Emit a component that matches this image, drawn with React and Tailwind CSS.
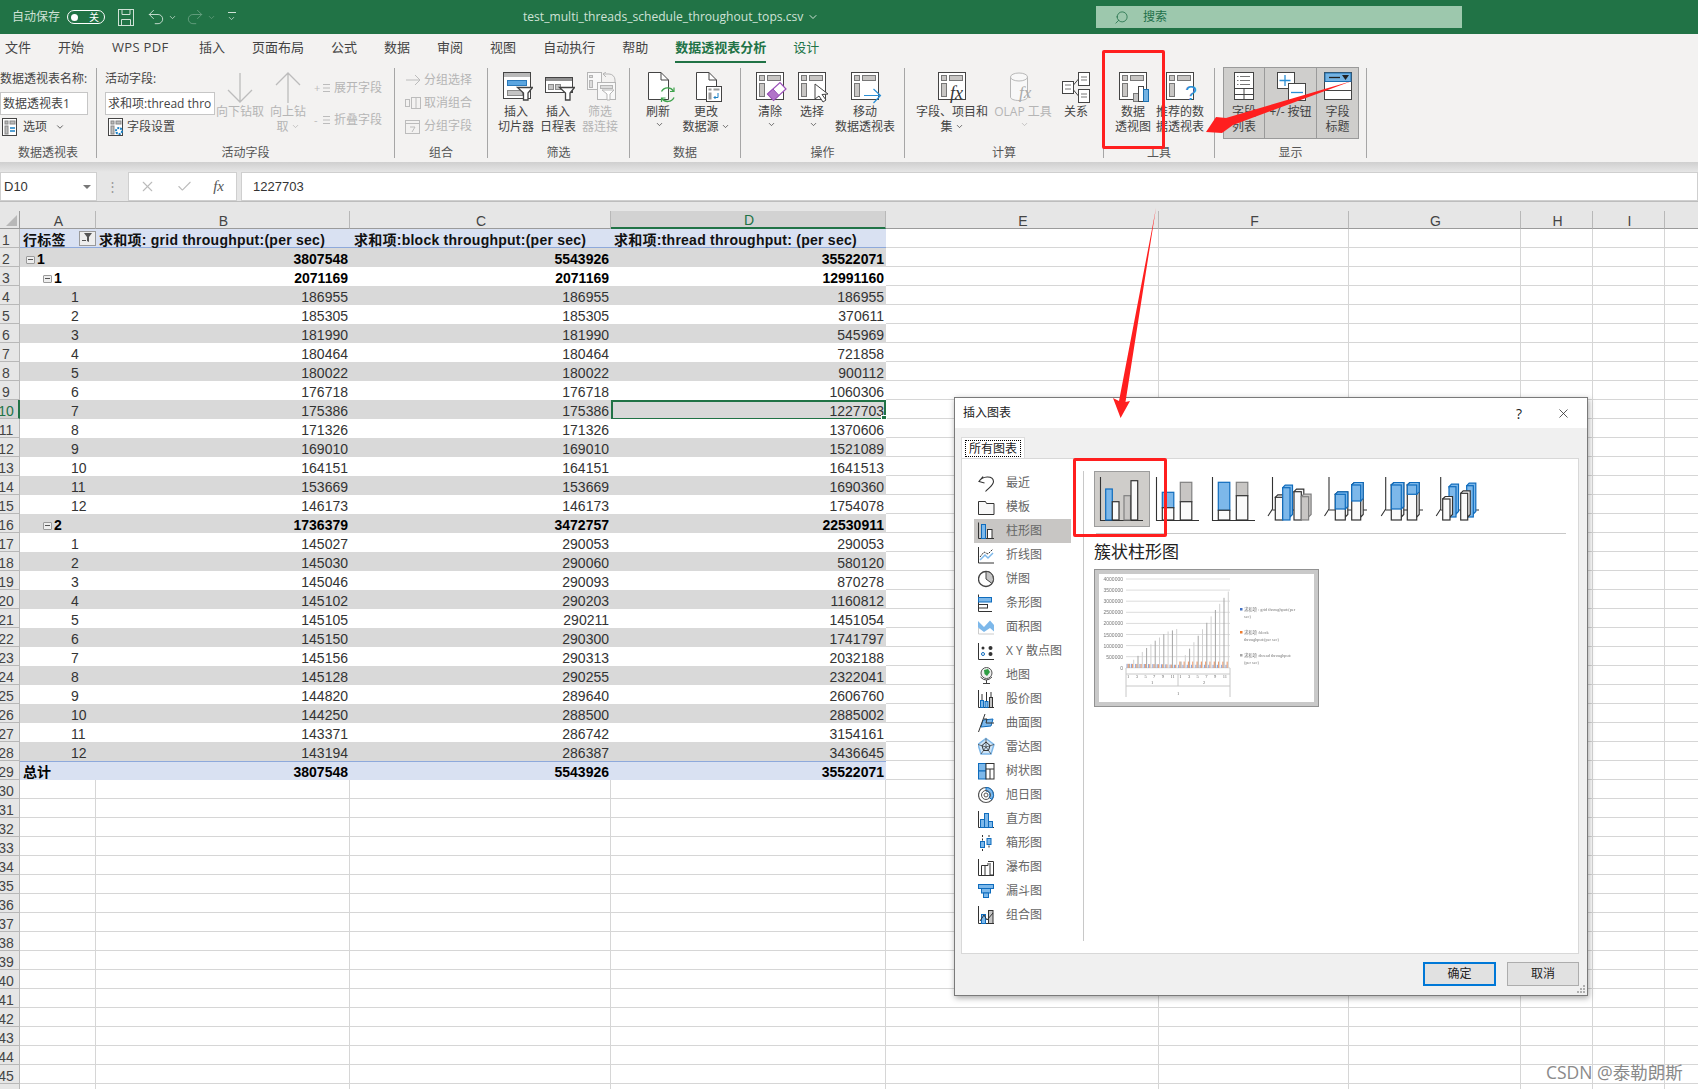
import { Check, ChevronDown, Redo2, Search, Undo2, X } from 'lucide-react';

const UI = "font-['Open_Sans','Noto_Sans_CJK_SC',sans-serif]";

const COLS = [
  { k: 'A', w: 'w-[76px]' },
  { k: 'B', w: 'w-[254px]' },
  { k: 'C', w: 'w-[261px]' },
  { k: 'D', w: 'w-[275px]' },
  { k: 'E', w: 'w-[273px]' },
  { k: 'F', w: 'w-[190px]' },
  { k: 'G', w: 'w-[172px]' },
  { k: 'H', w: 'w-[72px]' },
  { k: 'I', w: 'w-[72px]' },
  { k: '', w: 'w-[34px]' },
];

const ROWS = [
  ['1', 3807548, 5543926, 35522071, 'g1'],
  ['1', 2071169, 2071169, 12991160, 'g2'],
  ['1', 186955, 186955, 186955],
  ['2', 185305, 185305, 370611],
  ['3', 181990, 181990, 545969],
  ['4', 180464, 180464, 721858],
  ['5', 180022, 180022, 900112],
  ['6', 176718, 176718, 1060306],
  ['7', 175386, 175386, 1227703],
  ['8', 171326, 171326, 1370606],
  ['9', 169010, 169010, 1521089],
  ['10', 164151, 164151, 1641513],
  ['11', 153669, 153669, 1690360],
  ['12', 146173, 146173, 1754078],
  ['2', 1736379, 3472757, 22530911, 'g2'],
  ['1', 145027, 290053, 290053],
  ['2', 145030, 290060, 580120],
  ['3', 145046, 290093, 870278],
  ['4', 145102, 290203, 1160812],
  ['5', 145105, 290211, 1451054],
  ['6', 145150, 290300, 1741797],
  ['7', 145156, 290313, 2032188],
  ['8', 145128, 290255, 2322041],
  ['9', 144820, 289640, 2606760],
  ['10', 144250, 288500, 2885002],
  ['11', 143371, 286742, 3154161],
  ['12', 143194, 286387, 3436645],
];

// ---------- ribbon icons ----------
const Piv = ({ children }) => (
  <svg width="34" height="32" viewBox="0 0 34 32" fill="none">
    <rect x="3.5" y="0.5" width="27" height="27" fill="#fff" stroke="#444" />
    <rect x="6.5" y="3.5" width="5" height="5" fill="#c8c6c4" stroke="#777" />
    <rect x="14.5" y="3.5" width="13" height="5" fill="#c8c6c4" stroke="#777" />
    <rect x="6.5" y="11.5" width="5" height="13" fill="#c8c6c4" stroke="#777" />
    {children}
  </svg>
);

const Doc = ({ children }) => (
  <svg width="34" height="32" viewBox="0 0 34 32" fill="none">
    <path d="M7.5 .5H20L27.5 8V27.5H7.5Z" fill="#fff" stroke="#444" />
    <path d="M20 .5V8H27.5" stroke="#444" />
    {children}
  </svg>
);

const Funnel = ({ dim }) => (
  <path
    d="M18.5 15.5H33.5L29 21V28H24.5V21Z"
    fill="#fff"
    stroke={dim ? '#b5b5b5' : '#444'}
    strokeWidth="1.3"
  />
);

const Slicer = () => (
  <svg width="34" height="32" viewBox="0 0 34 32" fill="none">
    <rect x="4.5" y="0.5" width="27" height="26" fill="#fff" stroke="#444" />
    <rect x="5" y="1" width="26" height="4" fill="#b9b9b9" />
    <rect x="8.5" y="8.5" width="19" height="5" fill="#5aa5e0" stroke="#2a78b8" />
    <rect x="8.5" y="18.5" width="15" height="5" fill="#c4c4c4" stroke="#8a8a8a" />
    <Funnel />
  </svg>
);

const Timeline = () => (
  <svg width="34" height="32" viewBox="0 0 34 32" fill="none">
    <rect x="4.5" y="5.5" width="27" height="15" fill="#fff" stroke="#444" />
    <rect x="5" y="6" width="26" height="3" fill="#8f8f8f" />
    <rect x="7.5" y="12.5" width="5" height="5" fill="#c4c4c4" stroke="#8a8a8a" />
    <rect x="14.5" y="12.5" width="5" height="5" fill="#c4c4c4" stroke="#8a8a8a" />
    <Funnel />
  </svg>
);

const FilterLink = () => (
  <svg width="34" height="32" viewBox="0 0 34 32" fill="none" stroke="#b5b5b5">
    <rect x="4.5" y="0.5" width="14" height="17" fill="#f8f8f8" />
    <rect x="6.5" y="3.5" width="3" height="2" fill="#ddd" />
    <rect x="6.5" y="8.5" width="3" height="7" fill="#ddd" />
    <path d="M20 2H26A6 6 0 0 1 32 8V10M20 2L23 0M20 2L23 5" />
    <rect x="14.5" y="10.5" width="18" height="17" fill="#f8f8f8" />
    <rect x="17.5" y="13.5" width="12" height="3" fill="#ddd" />
    <path d="M19 18H31L27 22V28H24V22Z" fill="#fff" />
  </svg>
);

const Refresh = () => (
  <Doc>
    <path d="M20.5 19.5A7 7 0 0 1 32.5 19" stroke="#3fa34d" strokeWidth="1.4" />
    <path d="M33 25.5A7 7 0 0 1 21 26.5" stroke="#3fa34d" strokeWidth="1.4" />
    <path d="M33 15.5V19.5H29M20.5 30V26H24.5" stroke="#3fa34d" strokeWidth="1.2" />
  </Doc>
);

const Change = () => (
  <Doc>
    <rect x="17.5" y="14.5" width="15" height="15" fill="#fff" stroke="#444" />
    <rect x="19.5" y="16.5" width="3" height="2" fill="#9a9a9a" />
    <rect x="24.5" y="16.5" width="6" height="2" fill="#9a9a9a" />
    <rect x="19.5" y="20.5" width="3" height="7" fill="#9a9a9a" />
    <path d="M29 21V25.5H25M26.5 24L25 25.5L26.5 27" stroke="#1b80c4" />
  </Doc>
);

const Clear = () => (
  <Piv>
    <path d="M14.5 22L27 10.5L33 17L20.5 28.5Z" fill="#fff" stroke="#9a4fb8" strokeWidth="1.2" />
    <path d="M14.5 22L20 17L26 23.5L20.5 28.5Z" fill="#b174c8" stroke="#9a4fb8" />
  </Piv>
);

const SelectI = () => (
  <Piv>
    <path d="M20 12V27L24 24L28 30L31 28L27 22.5L33 22Z" fill="#fff" stroke="#444" />
  </Piv>
);

const Move = () => (
  <Piv>
    <path d="M16 23.5H32.5M25.5 17L32.5 23.5L25.5 31" stroke="#2a8fd6" strokeWidth="1.2" fill="none" />
  </Piv>
);

const Fx = () => (
  <Piv>
    <text x="15" y="27" fontFamily="Liberation Serif" fontStyle="italic" fontSize="18" fill="#333">fx</text>
  </Piv>
);

const Olap = () => (
  <svg width="34" height="32" viewBox="0 0 34 32" fill="none" stroke="#b8b8b8">
    <path d="M4.5 5V25C4.5 27 8 28.5 13 28.5S21.5 27 21.5 25V5" fill="#f8f8f8" />
    <ellipse cx="13" cy="5" rx="8.5" ry="4" fill="#f8f8f8" />
    <text x="13" y="26" fontFamily="Liberation Serif" fontStyle="italic" fontSize="17" fill="#aaa" stroke="none">fx</text>
  </svg>
);

const Relations = () => (
  <svg width="34" height="32" viewBox="0 0 34 32" fill="#fff" stroke="#444">
    <rect x="19.5" y="0.5" width="11" height="13" />
    <rect x="19.5" y="17.5" width="11" height="13" />
    <rect x="3.5" y="9.5" width="11" height="12" />
    <path d="M14.5 13L19.5 7M14.5 18L19.5 24" />
    <path d="M22 5H28M22 8H28M22 22H28M22 25H28M6 13H12M6 17H12" stroke="#777" />
  </svg>
);

const PivChart = () => (
  <Piv>
    <rect x="17.5" y="21.5" width="5" height="8" fill="#c4c4c4" stroke="#777" />
    <rect x="22.5" y="14.5" width="5" height="15" fill="#fff" stroke="#444" />
    <rect x="27.5" y="17.5" width="5" height="12" fill="#74b3e3" stroke="#1b6fb0" />
  </Piv>
);

const PivHelp = () => (
  <Piv>
    <text x="22" y="28" fontFamily="Liberation Sans" fontSize="21" fill="#2a8fd6">?</text>
  </Piv>
);

const FieldList = () => (
  <svg width="34" height="32" viewBox="0 0 34 32" fill="#fff" stroke="#444">
    <rect x="7.5" y="0.5" width="19" height="27" />
    <path d="M13 4.5H23M13 8.5H23M13 12.5H23" stroke="#777" />
    <path d="M10 4.5H11.5M10 8.5H11.5M10 12.5H11.5" stroke="#777" />
    <path d="M7.5 16.5H26.5M7.5 22.5H26.5M17 16.5V27.5" />
  </svg>
);

const PlusMinus = () => (
  <svg width="34" height="32" viewBox="0 0 34 32" fill="#fff">
    <rect x="3.5" y="0.5" width="17" height="16" stroke="#444" />
    <path d="M11 3V14M5.5 8.5H16.5" stroke="#2a8fd6" strokeWidth="1.3" />
    <rect x="14.5" y="11.5" width="17" height="17" stroke="#444" />
    <path d="M17 20.5H29" stroke="#2a8fd6" strokeWidth="1.3" />
  </svg>
);

const FieldHead = () => (
  <svg width="34" height="32" viewBox="0 0 34 32" fill="#fff" stroke="#444">
    <rect x="3.5" y="0.5" width="27" height="27" />
    <rect x="4" y="1" width="26" height="8.5" fill="#74b3e3" stroke="#1b6fb0" />
    <path d="M8 5.5H19" stroke="#222" strokeWidth="1.3" />
    <path d="M21 3H28L24.5 8Z" fill="#222" stroke="none" />
    <path d="M3.5 18.5H30.5" />
  </svg>
);

const Arrow = ({ up }) => (
  <svg width="28" height="32" viewBox="0 0 28 32" fill="none" stroke="#bcbcbc" strokeWidth="1.3">
    {up ? <path d="M14 31V1M2 13L14 1L26 13" /> : <path d="M14 1V30M2 18L14 30L26 18" />}
  </svg>
);

const ListMark = ({ sign }) => (
  <span className="flex w-[17px] items-center text-[11px] leading-none text-[#bcbcbc]">
    <span className="w-[7px]">{sign}</span>
    <svg width="9" height="10" stroke="#bcbcbc" fill="none"><path d="M2 1.5H9M2 5H9M2 8.5H9" /></svg>
  </span>
);

const OptionsIcon = ({ gear }) => (
  <svg width="16" height="18" viewBox="0 0 16 18" fill="none" stroke="#444">
    <rect x="0.5" y="0.5" width="14" height="17" fill="#fff" />
    <rect x="3" y="3" width="3" height="3" fill="#bbb" stroke="#888" />
    <rect x="8" y="3" width="5" height="3" fill="#bbb" stroke="#888" />
    <rect x="3" y="8" width="3" height="8" fill="#bbb" stroke="#888" />
    {gear ? (
      <circle cx="11" cy="13" r="3" fill="#fff" stroke="#1b80c4" strokeWidth="2" strokeDasharray="2 1" />
    ) : (
      <path d="M8 10H13M8 13H13" stroke="#1b80c4" strokeWidth="1.5" />
    )}
  </svg>
);

// ---------- ribbon pieces ----------
const Group = ({ w, label, children }) => (
  <div className={`flex h-[90px] shrink-0 flex-col border-r border-[#a6a6a6] ${w}`}>
    <div className="flex min-h-0 flex-1">{children}</div>
    <div className="h-[14px] text-center text-[12px] leading-[18px] text-[#555]">{label}</div>
  </div>
);

const Big = ({ w, icon, lines, caret, dim }) => (
  <div className={`flex shrink-0 flex-col items-center pt-[4px] text-center text-[12px] leading-[14.5px] ${w} ${dim ? 'text-[#b5b5b5]' : 'text-[#444]'}`}>
    <div className="flex h-[33px] items-start justify-center">{icon}</div>
    {lines.map((l, i) => (
      <div key={i} className="flex items-center whitespace-nowrap">
        {l}
        {caret && i === lines.length - 1 && <ChevronDown size={9} className="ml-[2px]" />}
      </div>
    ))}
  </div>
);

const GrayRow = ({ mark, text }) => (
  <div className="flex h-[23px] items-center gap-[3px] text-[12px] text-[#b5b5b5]">
    {mark}
    <span>{text}</span>
  </div>
);

const Ribbon = () => (
  <div className={`flex h-[100px] bg-[#f3f2f1] pt-[6px] ${UI}`}>
    <Group w="w-[97px]" label="数据透视表">
      <div className="flex flex-col text-[12px] text-[#444]">
        <div className="mt-[3px] h-[16px] whitespace-nowrap leading-[16px]">数据透视表名称:</div>
        <div className="mt-[5px] flex h-[23px] w-[88px] items-center border border-[#c6c6c6] bg-white pl-[2px] text-[12px]">数据透视表1</div>
        <div className="mt-[2px] flex h-[20px] items-center pl-[2px]">
          <OptionsIcon />
          <span className="ml-[5px]">选项</span>
          <ChevronDown size={10} className="ml-[8px]" />
        </div>
      </div>
    </Group>
    <Group w="w-[298px]" label="活动字段">
      <div className="flex w-[119px] shrink-0 flex-col pl-[8px] text-[12px] text-[#444]">
        <div className="mt-[3px] h-[16px] leading-[16px]">活动字段:</div>
        <div className="mt-[5px] flex h-[23px] w-[110px] items-center overflow-hidden whitespace-nowrap border border-[#c6c6c6] bg-white pl-[2px]">求和项:thread thro</div>
        <div className="mt-[2px] flex h-[20px] items-center pl-[3px]">
          <OptionsIcon gear />
          <span className="ml-[3px]">字段设置</span>
        </div>
      </div>
      <Big w="w-[48px]" dim icon={<Arrow />} lines={['向下钻取']} />
      <Big w="w-[48px]" dim icon={<Arrow up />} lines={['向上钻', '取']} caret />
      <div className="ml-[2px] flex flex-col pt-[8px]">
        <GrayRow mark={<ListMark sign="+" />} text="展开字段" />
        <div className="h-[9px]" />
        <GrayRow mark={<ListMark sign="-" />} text="折叠字段" />
      </div>
    </Group>
    <Group w="w-[93px]" label="组合">
      <div className="flex flex-col pl-[10px]">
        <GrayRow mark={<svg width="16" height="12" stroke="#bcbcbc" fill="none"><path d="M1 6H15M10 1L15 6L10 11" /></svg>} text="分组选择" />
        <GrayRow mark={<svg width="16" height="14" stroke="#bcbcbc" fill="none"><rect x="6.5" y="1.5" width="9" height="11" /><rect x="0.5" y="3.5" width="4" height="7" /><path d="M11 1.5V12.5" /></svg>} text="取消组合" />
        <GrayRow mark={<svg width="16" height="16" stroke="#bcbcbc" fill="none"><rect x="0.5" y="2.5" width="14" height="13" /><path d="M1 5.5H14M5 9H10L7 14" /></svg>} text="分组字段" />
      </div>
    </Group>
    <Group w="w-[142px]" label="筛选">
      <div className="flex pl-[7px]">
        <Big w="w-[42px]" icon={<Slicer />} lines={['插入', '切片器']} />
        <Big w="w-[42px]" icon={<Timeline />} lines={['插入', '日程表']} />
        <Big w="w-[42px]" dim icon={<FilterLink />} lines={['筛选', '器连接']} />
      </div>
    </Group>
    <Group w="w-[111px]" label="数据">
      <div className="flex pl-[4px]">
        <Big w="w-[48px]" icon={<Refresh />} lines={['刷新', '']} caret />
        <Big w="w-[48px]" icon={<Change />} lines={['更改', '数据源']} caret />
      </div>
    </Group>
    <Group w="w-[164px]" label="操作">
      <div className="flex pl-[8px]">
        <Big w="w-[42px]" icon={<Clear />} lines={['清除', '']} caret />
        <Big w="w-[42px]" icon={<SelectI />} lines={['选择', '']} caret />
        <Big w="w-[64px]" icon={<Move />} lines={['移动', '数据透视表']} />
      </div>
    </Group>
    <Group w="w-[199px]" label="计算">
      <div className="flex pl-[11px]">
        <Big w="w-[72px]" icon={<Fx />} lines={['字段、项目和', '集']} caret />
        <Big w="w-[70px]" dim icon={<Olap />} lines={['OLAP 工具', '']} caret />
        <Big w="w-[36px]" icon={<Relations />} lines={['关系']} />
      </div>
    </Group>
    <Group w="w-[111px]" label="工具">
      <div className="flex pl-[6px]">
        <Big w="w-[46px]" icon={<PivChart />} lines={['数据', '透视图']} />
        <Big w="w-[48px]" icon={<PivHelp />} lines={['推荐的数', '据透视表']} />
      </div>
    </Group>
    <Group w="w-[152px]" label="显示">
      <div className="-mt-[1px] flex h-[72px] pl-[8px]">
        <div className="w-[42px] border border-[#9a9a9a] bg-[#cfcecc]"><Big w="w-full" icon={<FieldList />} lines={['字段', '列表']} /></div>
        <div className="w-[52px] border-y border-r border-[#9a9a9a] bg-[#cfcecc]"><Big w="w-full" icon={<PlusMinus />} lines={['+/- 按钮']} /></div>
        <div className="w-[42px] border-y border-r border-[#9a9a9a] bg-[#cfcecc]"><Big w="w-full" icon={<FieldHead />} lines={['字段', '标题']} /></div>
      </div>
    </Group>
  </div>
);

// ---------- title bar / tabs / formula ----------
const TitleBar = () => (
  <div className={`flex h-[34px] items-center bg-[#217346] text-[#cfe2d6] ${UI}`}>
    <div className="flex w-[523px] shrink-0 items-center pl-[12px]">
      <span className="text-[12px]">自动保存</span>
      <span className="ml-[7px] flex h-[14px] w-[38px] items-center justify-between rounded-full border border-white pl-[3px] pr-[5px] text-[10px] leading-none text-white">
        <span className="h-[7px] w-[7px] rounded-full bg-white" />关
      </span>
      <svg className="ml-[13px]" width="16" height="17" viewBox="0 0 16 17" fill="none" stroke="#cfe2d6">
        <rect x="0.5" y="0.5" width="15" height="16" />
        <path d="M4 .5V5.5H12V.5M3.5 16.5V10.5H12.5V16.5" />
      </svg>
      <Undo2 size={20} strokeWidth={1.1} className="ml-[12px]" />
      <ChevronDown size={9} className="ml-[2px]" />
      <Redo2 size={20} strokeWidth={1.1} className="ml-[8px] opacity-40" />
      <ChevronDown size={9} className="ml-[2px] opacity-40" />
      <span className="ml-[11px] flex flex-col items-center gap-[2px]">
        <span className="h-px w-[8px] bg-[#cfe2d6]" />
        <ChevronDown size={9} className="-mt-[1px]" />
      </span>
    </div>
    <div className="flex w-[573px] shrink-0 items-center text-[12.1px]">
      test_multi_threads_schedule_throughout_tops.csv
      <ChevronDown size={12} className="ml-[4px]" />
    </div>
    <div className="flex h-[22px] w-[366px] items-center bg-[#9dc8ad] pl-[18px] text-[12px] text-[#22704a]">
      <Search size={15} strokeWidth={1.3} className="-scale-x-100" />
      <span className="ml-[14px]">搜索</span>
    </div>
  </div>
);

const TABS = ['文件', '开始', 'WPS PDF', '插入', '页面布局', '公式', '数据', '审阅', '视图', '自动执行', '帮助'];

const Tabs = () => (
  <div className={`flex h-[28px] items-center gap-[27px] bg-[#f3f2f1] pl-[5px] text-[13px] text-[#444] ${UI}`}>
    {TABS.map(t => <span key={t} className={`whitespace-nowrap ${t === 'WPS PDF' ? 'ml-[1px] mr-[2px] w-[58px] tracking-[0.3px]' : ''}`}>{t}</span>)}
    <span className="relative font-bold text-[#217346]">
      数据透视表分析
      <span className="absolute -bottom-[5px] left-0 h-[2px] w-full bg-[#217346]" />
    </span>
    <span className="text-[#217346]">设计</span>
  </div>
);

const FormulaBar = () => (
  <div className="bg-[#e6e6e6]">
    <div className="h-[10px] bg-gradient-to-b from-[#cfcfcf] to-[#e6e6e6]" />
    <div className="flex h-[29px] text-[13px] text-[#333]">
      <div className="flex w-[97px] items-center justify-between border border-[#cfcfcf] bg-white pl-[3px] pr-[5px] font-['Liberation_Sans']">
        D10
        <span className="h-0 w-0 border-x-[4px] border-t-[4px] border-x-transparent border-t-[#777]" />
      </div>
      <div className="flex w-[31px] items-center justify-center text-[#999]">⋮</div>
      <div className="flex w-[109px] items-center justify-between border border-[#cfcfcf] bg-white pl-[10px] pr-[12px] text-[#bbb]">
        <X size={17} strokeWidth={1.5} />
        <Check size={17} strokeWidth={1.5} />
        <span className="font-['Liberation_Serif'] text-[15px] italic text-[#555]">fx</span>
      </div>
      <div className="ml-[4px] flex flex-1 items-center border border-[#cfcfcf] bg-white pl-[11px] font-['Liberation_Sans']">1227703</div>
    </div>
    <div className="h-[10px] border-t border-[#bdbdbd]" />
  </div>
);

// ---------- sheet ----------
const RowHead = ({ n, active }) => (
  <div className={`flex h-full w-[20px] shrink-0 items-center overflow-hidden whitespace-nowrap border-b pt-[4px] text-[14px] ${active ? 'border-r-2 border-b-[#b8b8b8] border-r-[#217346] bg-[#d2d2d2] text-[#217346]' : 'border-r border-[#b8b8b8] bg-[#e6e6e6] text-[#444]'}`}>
    <span className="flex w-[12px] shrink-0 justify-center">{n}</span>
  </div>
);

const Minus = ({ className }) => (
  <span className={`flex h-[8px] w-[9px] items-center justify-center rounded-[1px] border border-[#9a9a9a] bg-[#eee] ${className}`}>
    <span className="h-px w-[5px] bg-[#555]" />
  </span>
);

const Empties = () =>
  COLS.slice(4).map(c => <div key={c.k} className={`h-full shrink-0 border-b border-r border-[#d6d6d6] ${c.w}`} />);

const HeaderRow = () => (
  <div className="flex h-[18px]">
    <div className="flex w-[20px] shrink-0 items-end justify-end border-b border-r border-[#9b9b9b] bg-[#e6e6e6] p-[2px]">
      <span className="h-0 w-0 border-b-[11px] border-l-[11px] border-b-[#b8b8b8] border-l-transparent" />
    </div>
    {COLS.map(c => (
      <div
        key={c.k}
        className={`flex shrink-0 items-center justify-center border-r pl-[2px] pt-[3px] text-[14px] ${c.w} ${c.k === 'D' ? 'border-b-2 border-r-[#b8b8b8] border-b-[#217346] bg-[#d2d2d2] text-[#217346]' : 'border-b border-b-[#9b9b9b] border-r-[#b8b8b8] bg-[#e6e6e6] text-[#444]'}`}
      >
        {c.k}
      </div>
    ))}
  </div>
);

const PivotHead = () => (
  <div className="flex h-[19px]">
    <RowHead n={1} />
    <div className="flex shrink-0 items-center border-b border-[#8ea9db] bg-[#d9e1f2] pt-[4px] text-[14px] font-bold leading-none tracking-[0.25px] text-[#111]">
      <div className="flex w-[76px] items-center justify-between pl-[3px]">
        行标签
        <span className="flex h-[15px] w-[17px] -translate-y-[2px] items-center justify-center border border-[#9a9a9a] bg-[#eee]">
          <svg width="11" height="10" fill="#555"><path d="M2 0H10L7 4V9L5 8V4Z" /><path d="M0 7H4V8H0Z" /></svg>
        </span>
      </div>
      <div className="w-[254px] whitespace-nowrap pl-[3px]">求和项: grid throughput:(per sec)</div>
      <div className="w-[261px] whitespace-nowrap pl-[4px]">求和项:block throughput:(per sec)</div>
      <div className="w-[275px] whitespace-nowrap pl-[3px]">求和项:thread throughput: (per sec)</div>
    </div>
    <Empties />
  </div>
);

const DataRow = ({ row, n }) => {
  const [label, b, c, d, kind] = row;
  const bold = Boolean(kind);
  const gray = n % 2 === 0;
  const active = n === 10;
  return (
    <div className="relative flex h-[19px]">
      <RowHead n={n} active={active} />
      <div className={`flex shrink-0 items-center pt-[4px] text-[14px] ${gray ? 'bg-[#d9d9d9]' : 'bg-white'} ${bold ? 'font-bold text-black' : 'text-[#333]'}`}>
        <div className="flex w-[76px] items-center">
          {kind === 'g1' && <Minus className="ml-[6px] mr-[2px]" />}
          {kind === 'g2' && <Minus className="ml-[23px] mr-[2px]" />}
          <span className={kind ? '' : 'ml-[51px]'}>{label}</span>
        </div>
        <div className="w-[254px] pr-[2px] text-right">{b}</div>
        <div className="w-[261px] pr-[2px] text-right">{c}</div>
        <div className="w-[275px] pr-[2px] text-right">{d}</div>
      </div>
      <Empties />
      {active && (
        <span className="absolute left-[611px] top-0 h-[20px] w-[275px] border-2 border-[#217346]">
          <span className="absolute -bottom-[3px] -right-[3px] h-[6px] w-[6px] border border-white bg-[#217346]" />
        </span>
      )}
    </div>
  );
};

const TotalRow = () => (
  <div className="flex h-[19px]">
    <RowHead n={29} />
    <div className="flex shrink-0 items-center border-t border-[#8ea9db] bg-[#d9e1f2] pt-[3px] text-[14px] font-bold text-black">
      <div className="w-[76px] pl-[3px]">总计</div>
      <div className="w-[254px] pr-[2px] text-right">3807548</div>
      <div className="w-[261px] pr-[2px] text-right">5543926</div>
      <div className="w-[275px] pr-[2px] text-right">35522071</div>
    </div>
    <Empties />
  </div>
);

const BlankRow = ({ n }) => (
  <div className="flex h-[19px]">
    <RowHead n={n} />
    {COLS.map(c => <div key={c.k} className={`h-full shrink-0 border-b border-r border-[#d6d6d6] ${c.w}`} />)}
  </div>
);

const Sheet = () => (
  <div className="font-['Liberation_Sans','Noto_Sans_CJK_SC',sans-serif]">
    <HeaderRow />
    <PivotHead />
    {ROWS.map((r, i) => <DataRow key={i} row={r} n={i + 2} />)}
    <TotalRow />
    {Array.from({ length: 17 }, (_, i) => <BlankRow key={i} n={i + 30} />)}
  </div>
);

// ---------- dialog ----------
const B = '#7db8ea';
const BS = '#0f6cbd';
const W = '#fafafa';

const Bar3 = ({ x, y, w, base = 44, fill = W, stroke = '#333', split }) => (
  <g stroke={stroke} strokeWidth="1.2">
    <path d={`M${x} ${y}l2.5 -2.5h${w}v${base - y - 3}l-2.5 2.5z`} fill={fill} />
    <rect x={x} y={y} width={w} height={base - y} fill={fill} />
    {split && (
      <g stroke={BS}>
        <path d={`M${x} ${y}l2.5 -2.5h${w}v${split - y}l-2.5 2.5z`} fill={B} />
        <rect x={x} y={y} width={w} height={split - y} fill={B} />
      </g>
    )}
  </g>
);

const Flat = ({ x, w = 11.5, y, h, fill = W, stroke = '#333' }) => (
  <rect x={x} y={y} width={w} height={h} fill={fill} stroke={stroke} strokeWidth="1.2" />
);

const Axes = ({ x3d, x = 1.5, children }) => (
  <svg width="46" height="46" viewBox="0 0 46 46" fill="none">
    <path
      d={x3d ? `M${x} 1V33M${x} 33L${x - 4.5} 40M${x} 34H44` : `M${x} 1V44.5H44`}
      stroke="#333"
      strokeWidth="1.1"
    />
    {children}
  </svg>
);

const CG = '#c8c6c4';
const CGS = '#808080';

const ChartIcons = [
  () => (
    <Axes>
      <Flat x={6.7} w={6.6} y={13} h={31} fill={B} stroke={BS} />
      <Flat x={13.3} w={6.7} y={25.7} h={18.3} />
      <Flat x={25} w={6.5} y={19.7} h={24.3} fill={CG} stroke={CGS} />
      <Flat x={32} w={6.7} y={4.7} h={39.3} />
    </Axes>
  ),
  () => (
    <Axes>
      <Flat x={7.3} y={16.3} h={15.4} fill={B} stroke={BS} />
      <Flat x={7.3} y={31.7} h={12.3} />
      <Flat x={25.3} y={6.3} h={19.4} fill={CG} stroke={CGS} />
      <Flat x={25.3} y={25.7} h={18.3} />
    </Axes>
  ),
  () => (
    <Axes>
      <Flat x={7.3} y={6.3} h={28} fill={B} stroke={BS} />
      <Flat x={7.3} y={34.3} h={9.7} />
      <Flat x={25.3} y={6.3} h={13.4} fill={CG} stroke={CGS} />
      <Flat x={25.3} y={19.7} h={24.3} />
    </Axes>
  ),
  () => (
    <Axes x3d x={5.5}>
      <Bar3 x={8.3} y={21.3} w={7.4} />
      <Bar3 x={15.7} y={11.7} w={7.3} fill={B} stroke={BS} />
      <Bar3 x={27} y={15.7} w={7.3} />
      <Bar3 x={34.3} y={20.7} w={7.3} fill={CG} stroke={CGS} />
    </Axes>
  ),
  () => (
    <Axes x3d x={6}>
      <Bar3 x={12.3} y={18.3} w={10} split={33} />
      <Bar3 x={28.7} y={9} w={9} split={25} />
    </Axes>
  ),
  () => (
    <Axes x3d x={6.7}>
      <Bar3 x={12.3} y={9} w={10} split={33} />
      <Bar3 x={28.3} y={9} w={9.4} split={18.3} />
    </Axes>
  ),
  () => (
    <Axes x3d x={5.7}>
      <Bar3 x={14} y={10.7} w={7} base={41} fill={B} stroke={BS} />
      <Bar3 x={7.7} y={23} w={7.3} />
      <Bar3 x={31.7} y={9.7} w={6.6} base={41} fill={B} stroke={BS} />
      <Bar3 x={25.7} y={17.3} w={7} />
    </Axes>
  ),
];

const side = {
  最近: <path d="M5 3.5L1 8.5L6.5 10M1 8.5C4 3 15 2 15.5 8.5C15.5 12.5 10.5 15 7.5 18.5" stroke="#333" strokeWidth="1.1" />,
  模板: <path d="M.5 4.5H7.5L8.5 6.5H16V17.5H.5Z" stroke="#333" fill="#f8f8f8" />,
  柱形图: <g stroke="#333"><path d="M.5 1.5V17.5H16" /><rect x="3.5" y="3.5" width="4" height="14" fill={B} stroke={BS} /><rect x="9.5" y="8.5" width="4.5" height="9" fill="#fff" /></g>,
  折线图: <g><path d="M.5 2V18H16" stroke="#333" /><path d="M2 15L7 10L10 13L15 8" stroke={B} strokeWidth="1.5" /><path d="M2 12L6 7L10 9L15 4" stroke="#333" strokeDasharray="2 1" /></g>,
  饼图: <g stroke="#444"><circle cx="8" cy="10" r="7.5" fill="#fff" strokeWidth="1.3" /><path d="M8 2.5A7.5 7.5 0 0 1 14 14.5L8 10Z" fill="#c4c4c4" /></g>,
  条形图: <g stroke="#333"><path d="M.5 1.5V18.5H14" /><rect x=".5" y="4.5" width="13" height="4.5" fill={B} stroke={BS} /><rect x=".5" y="11.5" width="9" height="3.5" fill="#fff" /></g>,
  面积图: <g><path d="M0 4L6 10L12 3.5L16 8V14.5L12 11L6 15L0 10.5Z" fill={B} /><path d="M.5 11V17H16" stroke="#ccc" /></g>,
  'X Y 散点图': <g><path d="M.5 2V18.5H16" stroke="#333" /><circle cx="5" cy="7" r="1.5" fill="#333" /><circle cx="12.5" cy="7" r="2" fill="#333" /><circle cx="12.5" cy="13" r="2" fill="#333" /><circle cx="5" cy="13" r="1.5" fill="#fff" stroke={BS} /></g>,
  地图: <g><circle cx="8.5" cy="8" r="5.5" fill="#eee" stroke="#555" /><path d="M6 5L10 4L12 7L9 11L6.5 9Z" fill="#2f9e44" /><path d="M2.5 12Q8 18 14 12M8.5 15V18M5 18.5H12" stroke="#444" /></g>,
  股价图: <g stroke="#333"><path d="M.5 1V18.5H16" /><rect x="2.5" y="11.5" width="3" height="7" fill={B} stroke={BS} /><path d="M4 5V11M8.5 3V18M13 3V18" /><rect x="7" y="12.5" width="3" height="6" fill={B} stroke={BS} /><rect x="11.5" y="8.5" width="3" height="10" fill="#c4c4c4" /></g>,
  曲面图: <g stroke="#333"><path d="M5 7L15 6L13 13L3 14Z" fill={B} stroke={BS} /><path d="M7 1L.5 19M6 6H9L8 10H16" /></g>,
  雷达图: <g><path d="M8 1.5L16 7.5L13 17H3L0 7.5Z" fill="#cfe5f8" stroke={B} strokeWidth="1.5" /><path d="M8 5L12 8.5L10.5 13.5H5.5L4 8.5Z" stroke="#333" /><path d="M8 1.5V10M0 7.5L8 10L16 7.5M3 17L8 10L13 17" stroke="#333" strokeWidth=".7" /></g>,
  树状图: <g><rect x=".5" y="2.5" width="7.5" height="7.5" fill={B} stroke={BS} /><rect x=".5" y="10" width="7.5" height="8" fill={B} stroke={BS} /><rect x="8" y="2.5" width="8" height="15.5" fill="#fff" stroke="#333" /><path d="M8 8H16M12 8V18" stroke="#333" /></g>,
  旭日图: <g><circle cx="8" cy="10" r="7.5" fill="#fff" stroke="#555" strokeWidth="1.2" /><path d="M8 2.5A7.5 7.5 0 0 1 14 14.5L11 12.5A4 4 0 0 0 8 6Z" fill={B} stroke={BS} /><circle cx="8" cy="10" r="4.5" stroke="#555" /><circle cx="8" cy="10" r="2" stroke="#555" /></g>,
  直方图: <g stroke="#333"><path d="M.5 2V18.5H16" /><rect x="2.5" y="10.5" width="4" height="8" fill={B} stroke={BS} /><rect x="6.5" y="4.5" width="4" height="14" fill={B} stroke={BS} /><rect x="10.5" y="12.5" width="4" height="6" fill={B} stroke={BS} /></g>,
  箱形图: <g><path d="M4.5 2V19M11 2V16" stroke="#333" strokeDasharray="2 1.5" /><rect x="2.5" y="8.5" width="4" height="6" fill={B} stroke={BS} /><rect x="9" y="5.5" width="4" height="6" fill={B} stroke={BS} /></g>,
  瀑布图: <g stroke="#333" fill="#fff"><path d="M.5 2V18.5H16" /><path d="M3.5 18V8.5H7V18M7 8.5H10V6M10 4.5H15.5V18H12V6" /></g>,
  漏斗图: <g fill={B} stroke={BS}><rect x=".5" y="3.5" width="15" height="4" /><rect x="3.5" y="7.5" width="9" height="4.5" /><rect x="5.5" y="12" width="5" height="4.5" /></g>,
  组合图: <g stroke="#333"><path d="M.5 1V18.5H16" /><rect x="3.5" y="9.5" width="4" height="9" fill={B} stroke={BS} /><rect x="10.5" y="5.5" width="4.5" height="13" fill="#c4c4c4" /><path d="M2 16L6 10L9 15L15 8" /></g>,
};

const Sidebar = () => (
  <div className="w-[120px] shrink-0 pl-[12px] pt-[12px]">
    {Object.entries(side).map(([name, icon]) => (
      <div key={name} className={`flex h-[24px] w-[97px] items-center pl-[4px] text-[12px] text-[#666] ${name === '柱形图' ? 'bg-[#c8c6c4]' : ''}`}>
        <svg width="18" height="20" viewBox="0 0 18 20" fill="none" className="shrink-0">{icon}</svg>
        <span className="ml-[10px] whitespace-nowrap">{name}</span>
      </div>
    ))}
  </div>
);

const Preview = () => {
  const rows = ROWS.filter(r => !r[4]);
  const yOf = v => 94 - (v / 4000000) * 89;
  return (
    <div className="mt-[7px] h-[138px] w-[225px] border border-[#929292] bg-[#c9c9c9] p-[4px] text-[0px]">
      <svg width="215" height="128" viewBox="0 0 215 128" fill="none" className="bg-white blur-[0.5px]">
        {[0, 1, 2, 3, 4, 5, 6, 7, 8].map(i => (
          <path key={i} d={`M27 ${5 + i * 11.1}H131`} stroke="#dcdcdc" />
        ))}
        {['4000000', '3500000', '3000000', '2500000', '2000000', '1500000', '1000000', '500000', '0'].map((t, i) => (
          <text key={t} x="24" y={7 + i * 11.1} textAnchor="end" fontSize="5" fontFamily="Liberation Sans" fill="#777">{t}</text>
        ))}
        {rows.map((r, i) => {
          const x = 27.5 + i * 4.3;
          return (
            <g key={i}>
              <rect x={x} y={yOf(r[1])} width="1.2" height={94 - yOf(r[1])} fill="#8fa8dc" />
              <rect x={x + 1.2} y={yOf(r[2])} width="1.2" height={94 - yOf(r[2])} fill="#f0a070" />
              <rect x={x + 2.4} y={yOf(r[3])} width="1" height={94 - yOf(r[3])} fill={i % 2 ? '#d0d0d0' : '#a5a5a5'} />
            </g>
          );
        })}
        <path d="M27 94V123M131 94V123M79 100V112M27 112H131M27 100H131" stroke="#c8c8c8" />
        {[1, 3, 5, 7, 9, 11, 1, 3, 5, 7, 9, 11].map((t, i) => (
          <text key={i} x={28 + i * 8.7} y="104" fontSize="4.5" fontFamily="Liberation Serif" fill="#666">{t}</text>
        ))}
        <text x="52" y="110" fontSize="4.5" fontFamily="Liberation Serif" fill="#666">1</text>
        <text x="104" y="110" fontSize="4.5" fontFamily="Liberation Serif" fill="#666">2</text>
        <text x="78" y="121" fontSize="4.5" fontFamily="Liberation Serif" fill="#666">1</text>
        <g fontSize="4.3" fontFamily="Liberation Serif, Noto Sans CJK SC" fill="#777">
          <rect x="141" y="34" width="2.5" height="2.5" fill="#4472c4" />
          <text x="145" y="37">求和项 : grid throughput:(per</text>
          <text x="145" y="44">sec)</text>
          <rect x="141" y="57" width="2.5" height="2.5" fill="#ed7d31" />
          <text x="145" y="60">求和项 :block</text>
          <text x="145" y="67">throughput:(per sec)</text>
          <rect x="141" y="80" width="2.5" height="2.5" fill="#a5a5a5" />
          <text x="145" y="83">求和项 :thread throughput:</text>
          <text x="145" y="90">(per sec)</text>
        </g>
      </svg>
    </div>
  );
};

const Dialog = () => (
  <div className={`absolute left-[954px] top-[397px] h-[599px] w-[634px] border border-[#7a7a7a] bg-[#f0f0f0] shadow-[1px_2px_6px_rgba(0,0,0,0.35)] ${UI}`}>
    <div className="flex h-[30px] items-center justify-between bg-white pl-[8px] pr-[16px] text-[12px] text-[#222]">
      插入图表
      <span className="flex items-center gap-[34px]">
        <span className="text-[14px]">?</span>
        <X size={15} strokeWidth={1.2} />
      </span>
    </div>
    <div className="ml-[6px] mt-[9px] flex h-[21px] w-[64px] items-center justify-center border-x border-t border-[#dcdcdc] bg-white text-[12px] text-[#222]">
      <span className="border border-dotted border-black px-[3px] leading-[15px]">所有图表</span>
    </div>
    <div className="ml-[6px] flex h-[496px] w-[618px] border border-[#d8d8d8] bg-white">
      <Sidebar />
      <div className="ml-px mt-[12px] h-[470px] flex-1 border-l border-[#c8c8c8] pl-[10px]">
        <div className="flex">
          {ChartIcons.map((Icon, i) => (
            <div key={i} className={`flex h-[56px] w-[56px] items-center justify-center ${i === 0 ? 'border border-[#9c9c9c] bg-[#cfcdca]' : ''}`}>
              <Icon />
            </div>
          ))}
        </div>
        <div className="ml-[2px] mt-[6px] h-px w-[470px] bg-[#c8c8c8]" />
        <div className="mt-[8px] text-[17px] leading-[20px] text-[#222]">簇状柱形图</div>
        <Preview />
      </div>
    </div>
    <div className="mt-[8px] flex justify-end gap-[11px] pr-[8px] text-[12px] text-[#222]">
      <button className="h-[24px] w-[73px] border-2 border-[#0078d7] bg-[#e1e1e1]">确定</button>
      <button className="h-[24px] w-[72px] border border-[#adadad] bg-[#e1e1e1]">取消</button>
    </div>
    <svg className="absolute bottom-[1px] right-[1px]" width="10" height="10" fill="#b0b0b0">
      <rect x="7" y="1" width="2" height="2" /><rect x="4" y="4" width="2" height="2" /><rect x="7" y="4" width="2" height="2" />
      <rect x="1" y="7" width="2" height="2" /><rect x="4" y="7" width="2" height="2" /><rect x="7" y="7" width="2" height="2" />
    </svg>
  </div>
);

// ---------- red marks drawn over the screenshot ----------
const Annotations = () => (
  <>
    <div className="absolute left-[1102px] top-[50px] h-[99px] w-[63px] rounded-[2px] border-[3px] border-[#ff1f1f]" />
    <div className="absolute left-[1073px] top-[458px] h-[79px] w-[94px] rounded-[2px] border-[3px] border-[#ff1f1f]" />
    <svg className="pointer-events-none absolute inset-0" width="1698" height="1089" fill="#ff1f1f">
      <path d="M1352 81L1233 125L1222 133L1206 132L1216 117L1226 118Z" />
      <path d="M1156 208L1125.5 402L1130 401L1120.6 418L1113 398L1119 401Z" />
    </svg>
  </>
);

export default function App() {
  return (
    <div className="relative h-[1089px] w-[1698px] overflow-hidden bg-white">
      <TitleBar />
      <Tabs />
      <Ribbon />
      <FormulaBar />
      <Sheet />
      <Dialog />
      <Annotations />
      <div className={`absolute left-[1546px] top-[1059px] whitespace-nowrap text-[17.5px] text-[#8a8a8a] ${UI}`}>CSDN @泰勒朗斯</div>
    </div>
  );
}
